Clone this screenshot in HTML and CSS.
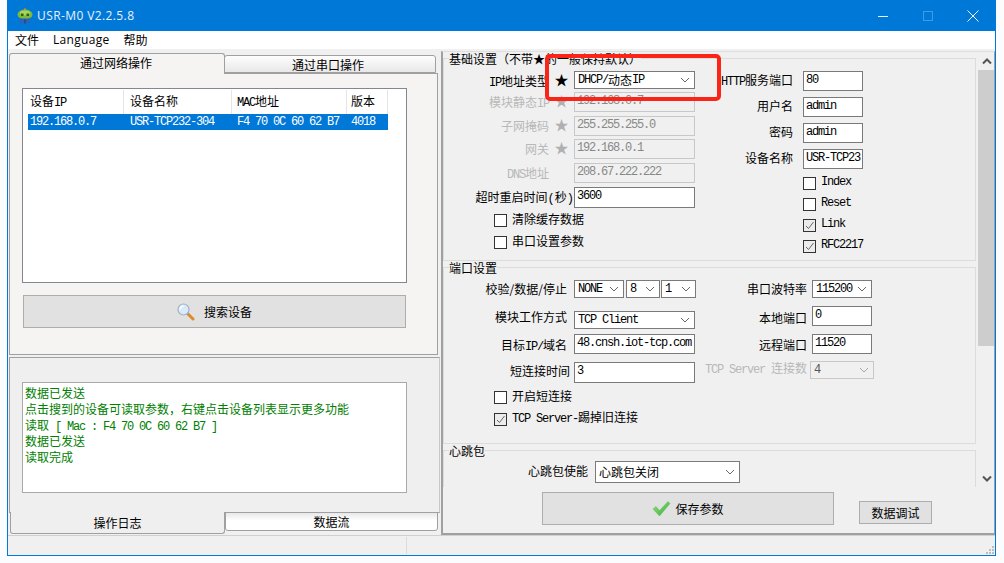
FILE: index.html
```html
<!DOCTYPE html>
<html lang="zh">
<head>
<meta charset="utf-8">
<title>USR-M0 V2.2.5.8</title>
<link rel="stylesheet" href="styles.css">
</head>
<body>
<div class="window">
  <header class="titlebar">
    <svg class="app-icon" width="18" height="18" viewBox="0 0 18 18">
      <path d="M8 1.5 L10 1.5 L10 4 L8 4Z" fill="#e08a2a"/>
      <ellipse cx="9" cy="7.5" rx="7.5" ry="5" fill="#7cb83a"/>
      <ellipse cx="9" cy="6" rx="5" ry="2.5" fill="#a9d65c"/>
      <rect x="5" y="6.5" width="2.5" height="2.5" fill="#2e5d1c"/>
      <rect x="10.5" y="6.5" width="2.5" height="2.5" fill="#2e5d1c"/>
      <rect x="4" y="11.5" width="10" height="4.5" fill="#2d62b5"/>
      <rect x="8.5" y="12.5" width="1" height="4" fill="#173a78"/>
    </svg>
    <span class="app-title">USR-M0 V2.2.5.8</span>
    <div class="win-controls">
      <div class="win-btn"><svg width="12" height="12" viewBox="0 0 12 12"><path d="M1 6.5H11" stroke="#e8f2fb" fill="none"/></svg></div>
      <div class="win-btn"><svg width="12" height="12" viewBox="0 0 12 12"><rect x="1.5" y="1.5" width="9" height="9" stroke="#3f9be3" fill="none"/></svg></div>
      <div class="win-btn"><svg width="12" height="12" viewBox="0 0 12 12"><path d="M.5 .5L11.5 11.5M11.5 .5L.5 11.5" stroke="#fff" fill="none"/></svg></div>
    </div>
  </header>

  <nav class="menubar">
    <span class="menu-item">文件</span>
    <span class="menu-item menu-latin">Language</span>
    <span class="menu-item">帮助</span>
  </nav>

  <main class="main">
    <section class="left">
      <div class="tabs">
        <div class="tab tab-active">通过网络操作</div>
        <div class="tab tab-idle">通过串口操作</div>
      </div>
      <div class="panel">
        <div class="devices">
          <div class="dev-row dev-head">
            <div class="c1">设备<span class="m">IP</span></div>
            <div class="c2">设备名称</div>
            <div class="c3"><span class="m">MAC</span>地址</div>
            <div class="c4">版本</div>
          </div>
          <div class="dev-row dev-sel">
            <div class="c1 m">192.168.0.7</div>
            <div class="c2 m">USR-TCP232-304</div>
            <div class="c3 m">F4 70 0C 60 62 B7</div>
            <div class="c4 m">4018</div>
          </div>
        </div>
        <div class="btn btn-search">
          <svg width="18" height="18" viewBox="0 0 18 18">
            <path d="M10.5 10.5L16 16" stroke="#e08a2a" stroke-width="3" stroke-linecap="round"/>
            <path d="M9.5 9.5L11.5 11.5" stroke="#9a9a9a" stroke-width="2"/>
            <circle cx="6.5" cy="6.5" r="5.5" fill="#dbeaf8" stroke="#9fb2c4" stroke-width="1.2"/>
            <path d="M3 6.5A3.5 3.5 0 0 1 6.5 3" stroke="#fff" stroke-width="1.5" fill="none"/>
          </svg>
          <span>搜索设备</span>
        </div>
      </div>

      <div class="log-pane">
        <div class="log">
          <div class="log-line">数据已发送</div>
          <div class="log-line">点击搜到的设备可读取参数，右键点击设备列表显示更多功能</div>
          <div class="log-line">读取<span class="m"> [ Mac : F4 70 0C 60 62 B7 ]</span></div>
          <div class="log-line">数据已发送</div>
          <div class="log-line">读取完成</div>
        </div>
      </div>
      <div class="tabs-bottom">
        <div class="btab btab-active">操作日志</div>
        <div class="btab btab-idle">数据流</div>
      </div>
    </section>

    <section class="right">
      <div class="scroll-area">
        <div class="groups">
          <fieldset class="group">
            <legend>基础设置（不带★的一般保持默认）</legend>
            <div class="cols">
              <div class="col-a rows-a1">
                <div class="row"><label class="lab">
                  <span class="m">IP</span>地址类型</label><span class="star">★</span>
                  <div class="sel w121"><span class="m">DHCP/</span>动态<span class="m">IP</span><svg class="chev" width="10" height="6" viewBox="0 0 10 6"><path d="M1 1L5 5L9 1" stroke="#666" fill="none"/></svg></div>
                </div>
                <div class="row dim"><label class="lab">模块静态<span class="m">IP</span></label><span class="star">★</span><div class="inp w121 m">192.168.0.7</div></div>
                <div class="row dim"><label class="lab">子网掩码</label><span class="star">★</span><div class="inp w121 m">255.255.255.0</div></div>
                <div class="row dim"><label class="lab">网关</label><span class="star">★</span><div class="inp w121 m">192.168.0.1</div></div>
                <div class="row dim"><label class="lab"><span class="m">DNS</span>地址</label><span class="star"></span><div class="inp w121 m">208.67.222.222</div></div>
                <div class="row"><label class="lab lab-wide">超时重启时间<span class="m paren">(</span>秒<span class="m paren">)</span></label><div class="inp w121 h21 m">3600</div></div>
                <div class="row check-a"><span class="cb"></span><span class="cb-text">清除缓存数据</span></div>
                <div class="row check-a"><span class="cb"></span><span class="cb-text">串口设置参数</span></div>
              </div>
              <div class="col-b">
                <div class="row"><label class="lab-b"><span class="m">HTTP</span>服务端口</label><div class="inp w60 m">80</div></div>
                <div class="row"><label class="lab-b">用户名</label><div class="inp w60 m">admin</div></div>
                <div class="row"><label class="lab-b">密码</label><div class="inp w60 m">admin</div></div>
                <div class="row"><label class="lab-b">设备名称</label><div class="inp w60 m">USR-TCP23</div></div>
                <div class="row check-b"><span class="cb"></span><span class="cb-text m">Index</span></div>
                <div class="row check-b"><span class="cb"></span><span class="cb-text m">Reset</span></div>
                <div class="row check-b"><span class="cb cb-on"><svg width="11" height="11" viewBox="0 0 11 11"><path d="M2 6L4.5 8.5L9.5 2" stroke="#666" fill="none"/></svg></span><span class="cb-text m">Link</span></div>
                <div class="row check-b"><span class="cb cb-on"><svg width="11" height="11" viewBox="0 0 11 11"><path d="M2 6L4.5 8.5L9.5 2" stroke="#666" fill="none"/></svg></span><span class="cb-text m">RFC2217</span></div>
              </div>
            </div>
          </fieldset>

          <fieldset class="group group-2">
            <legend>端口设置</legend>
            <div class="cols">
              <div class="col-a rows-a2">
                <div class="row"><label class="lab2">校验/数据/停止</label>
                  <div class="sel w50"><span class="m">NONE</span><svg class="chev" width="10" height="6" viewBox="0 0 10 6"><path d="M1 1L5 5L9 1" stroke="#666" fill="none"/></svg></div>
                  <div class="sel w34 ml2"><span class="m">8</span><svg class="chev" width="10" height="6" viewBox="0 0 10 6"><path d="M1 1L5 5L9 1" stroke="#666" fill="none"/></svg></div>
                  <div class="sel w35 ml1"><span class="m">1</span><svg class="chev" width="10" height="6" viewBox="0 0 10 6"><path d="M1 1L5 5L9 1" stroke="#666" fill="none"/></svg></div>
                </div>
                <div class="row"><label class="lab2 up3">模块工作方式</label><div class="sel w121"><span class="m">TCP Client</span><svg class="chev" width="10" height="6" viewBox="0 0 10 6"><path d="M1 1L5 5L9 1" stroke="#666" fill="none"/></svg></div></div>
                <div class="row"><label class="lab2 dn2">目标<span class="m">IP/</span>域名</label><div class="inp w121 m">48.cnsh.iot-tcp.com</div></div>
                <div class="row"><label class="lab2 lab-tight">短连接时间</label><div class="inp w121 h21 m">3</div></div>
                <div class="row check-a"><span class="cb"></span><span class="cb-text">开启短连接</span></div>
                <div class="row check-a"><span class="cb cb-on"><svg width="11" height="11" viewBox="0 0 11 11"><path d="M2 6L4.5 8.5L9.5 2" stroke="#666" fill="none"/></svg></span><span class="cb-text"><span class="m">TCP Server-</span>踢掉旧连接</span></div>
              </div>
              <div class="col-c">
                <div class="row"><label class="lab-c">串口波特率</label><div class="sel w60 sel-c"><span class="m">115200</span><svg class="chev" width="10" height="6" viewBox="0 0 10 6"><path d="M1 1L5 5L9 1" stroke="#666" fill="none"/></svg></div></div>
                <div class="row"><label class="lab-c dn3">本地端口</label><div class="inp w60 m">0</div></div>
                <div class="row"><label class="lab-c dn2">远程端口</label><div class="inp w60 m">11520</div></div>
                <div class="row dim"><label class="lab-c lab-srv"><span class="m">TCP Server </span>连接数</label><div class="sel sel-off m"><span>4</span><svg class="chev" width="10" height="6" viewBox="0 0 10 6"><path d="M1 1L5 5L9 1" stroke="#aaa" fill="none"/></svg></div></div>
              </div>
            </div>
          </fieldset>

          <fieldset class="group group-3">
            <legend>心跳包</legend>
            <div class="row"><label class="lab-h">心跳包使能</label><div class="sel sel-h"><span>心跳包关闭</span><svg class="chev" width="10" height="6" viewBox="0 0 10 6"><path d="M1 1L5 5L9 1" stroke="#666" fill="none"/></svg></div></div>
          </fieldset>
        </div>
        <div class="scrollbar">
          <div class="sb-arrow"><svg width="10" height="7" viewBox="0 0 10 7"><path d="M1 5.5L5 1.5L9 5.5" stroke="#555" stroke-width="2" fill="none"/></svg></div>
          <div class="sb-thumb"></div>
          <div class="sb-arrow sb-down"><svg width="10" height="7" viewBox="0 0 10 7"><path d="M1 1.5L5 5.5L9 1.5" stroke="#555" stroke-width="2" fill="none"/></svg></div>
        </div>
      </div>
      <div class="footer">
        <div class="btn btn-save">
          <svg width="19" height="17" viewBox="0 0 19 17">
            <defs><linearGradient id="gc" x1="0" y1="0" x2="1" y2="1"><stop offset="0" stop-color="#9be27a"/><stop offset="1" stop-color="#2fae3c"/></linearGradient></defs>
            <path d="M1 9L4 6.5L7.5 10.5L16 1.5L18 3.5L7.5 16Z" fill="url(#gc)" stroke="#5cb85c" stroke-width=".5"/>
          </svg>
          <span>保存参数</span>
        </div>
        <div class="btn btn-debug">数据调试</div>
      </div>
    </section>
  </main>

  <footer class="statusbar">
    <div class="status-cell"></div>
    <svg class="grip" width="10" height="10" viewBox="0 0 10 10"><path d="M7 1h2v2H7zM4 4h2v2H4zM7 4h2v2H7zM1 7h2v2H1zM4 7h2v2H4zM7 7h2v2H7z" fill="#bdbdbd"/></svg>
  </footer>

  <div class="annotation"></div>
</div>
</body>
</html>
```

FILE: styles.css
```css
* { box-sizing: border-box; }
html, body { margin: 0; padding: 0; }
body {
  width: 1004px;
  height: 563px;
  overflow: hidden;
  background: #fbfcfd;
  color: #000;
  font: 12px/16px "Noto Sans CJK SC", sans-serif;
}
.m {
  font-family: "Liberation Mono", monospace;
  font-size: 12px;
  letter-spacing: -1.2px;
}
.paren { letter-spacing: 0; }

.window {
  position: relative;
  margin-left: 7px;
  width: 989px;
  height: 556px;
  border: 1px solid #0078d7;
  border-top: 0;
  background: #f0f0f0;
  display: flex;
  flex-direction: column;
}

/* title bar */
.titlebar {
  height: 31px;
  flex: none;
  background: #0078d7;
  display: flex;
  align-items: center;
  padding-left: 8px;
  color: #e6f1fb;
}
.app-icon { margin-right: 3px; }
.app-title { font: 12px/16px "Open Sans", sans-serif; letter-spacing: .4px; }
.win-controls { margin-left: auto; display: flex; }
.win-btn { width: 45px; height: 31px; display: flex; align-items: center; justify-content: center; }

/* menu */
.menubar {
  height: 18px;
  flex: none;
  background: #fff;
  display: flex;
  align-items: center;
  padding-left: 7px;
  gap: 14px;
}
.menu-latin { font-family: "Open Sans", sans-serif; letter-spacing: .3px; }

.main { flex: none; height: 486px; display: flex; }

/* left column */
.left { width: 433px; flex: none; padding: 4px 0 0 1px; }
.tabs { display: flex; height: 20px; align-items: flex-end; position: relative; z-index: 1; }
.tab { text-align: center; border: 1px solid #a0a0a0; border-bottom: 0; }
.tab-active { width: 216px; height: 21px; margin-bottom: -1px; padding-right: 2px; background: #f5f4f2; border-radius: 3px 3px 0 0; line-height: 18px; }
.tab-idle { width: 212px; height: 18px; margin-left: -1px; padding-right: 4px; border-left: 1px solid #a0a0a0; background: linear-gradient(#fdfdfd, #e8e8e8); border-bottom: 1px solid #a0a0a0; border-radius: 3px 3px 0 0; line-height: 17px; }
.panel { width: 429px; height: 282px; background: #f5f4f2; border: 1px solid #a0a0a0; padding: 14px 0 0 12px; }
.devices { width: 385px; height: 195px; background: #fff; border: 1px solid #828790; padding: 1px 5px; }
.dev-row { display: flex; width: 360px; }
.dev-head { height: 24px; line-height: 22px; }
.dev-head > div { border-right: 1px solid #e5e5e5; }
.dev-sel { height: 16px; line-height: 16px; background: #0078d7; color: #fff; }
.c1 { width: 96px; padding-left: 2px; }
.c2 { width: 108px; padding-left: 6px; }
.c3 { width: 115px; padding-left: 5px; }
.c4 { width: 41px; padding-left: 4px; }

.btn { background: #e1e1e1; border: 1px solid #adadad; display: flex; align-items: center; justify-content: center; }
.btn-search { width: 383px; height: 33px; margin: 12px 0 0 1px; gap: 9px; }

.log-pane { width: 431px; height: 156px; margin-top: 2px; background: #efefef; border: 1px solid #a0a0a0; border-right-color: #c8c8c8; padding: 24px 0 0 12px; }
.log { width: 385px; height: 111px; background: #fff; border: 1px solid #a9a9a9; padding: 2px 2px; color: #008000; }
.log-line { height: 16px; white-space: nowrap; }
.tabs-bottom { display: flex; align-items: flex-start; margin-top: -1px; padding-left: 1px; position: relative; }
.btab { text-align: center; border: 1px solid #a0a0a0; border-top: 0; border-radius: 0 0 3px 3px; }
.btab-active { width: 215px; height: 22px; background: #efefef; line-height: 21px; }
.btab-idle { width: 213px; height: 19px; background: linear-gradient(#e8e8e8, #fff 45%); border-top: 1px solid #a0a0a0; line-height: 17px; }

/* right column */
.right { width: 554px; flex: none; height: 484px; margin-top: 2px; border: 2px solid #a0a0a0; border-top: 1px solid #dedede; border-right-width: 1px; }
.scroll-area { height: 435px; display: flex; overflow: hidden; }
.groups { width: 534px; flex: none; overflow: hidden; }
.group { margin: 0; padding: 0; width: 533px; border: 1px solid #dcdcdc; min-width: 0; }
.group legend { margin-left: 5px; padding: 0; height: 13px; line-height: 13px; white-space: nowrap; }
.group-3 { height: 80px; padding-top: 4px; }
.cols { display: flex; padding-top: 6px; padding-bottom: 7px; }
.group-2 .cols { padding-top: 6px; padding-bottom: 17px; }

.col-a { width: 251px; flex: none; display: grid; }
.rows-a1 { grid-template-rows: 21px 24px 23px 24px 24px 26px 22px 14px; }
.rows-a2 { grid-template-rows: 31px 23px 28px 28px 22px 14px; }
.col-b { margin-left: 25px; display: grid; grid-template-rows: 26px 26px 26px 27px 21px 21px 21px 14px; }
.col-c { display: grid; grid-template-rows: 26px 28px 27px 20px; }

.row { display: flex; align-items: flex-start; }
.lab, .lab2, .lab-b, .lab-c, .lab-h { text-align: right; line-height: 19px; flex: none; white-space: nowrap; }
.lab { width: 105px; }
.lab-wide { width: 130px; }
.star { width: 25px; flex: none; text-align: center; line-height: 17px; font-size: 14px; }
.lab2 { width: 123px; margin-right: 7px; line-height: 17px; }
.lab-tight { margin-right: 4px; width: 126px; }
.lab-b { width: 73px; margin-right: 10px; line-height: 18px; }
.lab-c { width: 112px; margin-right: 5px; line-height: 17px; }
.lab-srv { margin-right: 3px; margin-top: -2px; width: 112px; }
.lab-h { width: 144px; margin-right: 7px; }
.up3 { margin-top: -3px; }
.dn2 { padding-top: 2px; }
.dn3 { padding-top: 3px; }

.inp { height: 20px; line-height: 17px; border: 1px solid #7a7a7a; background: #fff; padding-left: 2px; white-space: nowrap; overflow: hidden; flex: none; }
.h21 { height: 21px; }
.w121 { width: 121px; }
.w60 { width: 60px; }
.w50 { width: 50px; }
.w34 { width: 34px; }
.w35 { width: 35px; }
.ml1 { margin-left: 1px; }
.ml2 { margin-left: 2px; }
.sel { height: 18px; line-height: 16px; border: 1px solid #7a7a7a; background: #fff; padding: 0 3px; display: flex; align-items: center; flex: none; white-space: nowrap; position: relative; }
.sel .chev { margin-left: auto; flex: none; margin-right: 1px; }
.sel-off { width: 64px; color: #555; border-color: #c8c8c8; background: #f0f0f0; }
.sel-h { width: 145px; height: 22px; }

.dim { color: #b8b8b8; }
.dim .inp { border-color: #c8c8c8; background: #f0f0f0; color: #888; }
.dim .star { color: #b0b0b0; }

.check-a { padding-left: 50px; align-items: center; gap: 5px; height: 14px; }
.check-b { padding-left: 83px; align-items: center; gap: 5px; height: 14px; }
.cb-text { margin-top: -2px; }
.cb { width: 13px; height: 13px; flex: none; border: 1px solid #333; background: #fff; display: flex; align-items: center; justify-content: center; }
.cb-on { background: #ececec; }

/* scrollbar */
.scrollbar { width: 17px; flex: none; margin-left: 1px; display: flex; flex-direction: column; background: #f0f0f0; }
.sb-arrow { height: 18px; display: flex; align-items: center; justify-content: center; flex: none; }
.sb-thumb { height: 276px; background: #cdcdcd; flex: none; }
.sb-down { margin-top: auto; }

/* footer */
.footer { height: 46px; display: flex; align-items: flex-start; padding: 5px 0 0 99px; }
.btn-save { width: 292px; height: 33px; gap: 4px; }
.btn-debug { width: 73px; height: 23px; margin: 9px 0 0 25px; }

/* status */
.statusbar { height: 20px; flex: none; border-top: 1px solid #d0d0d0; display: flex; align-items: stretch; position: relative; }
.status-cell { width: 399px; border-right: 1px solid #dcdcdc; margin: 1px 0; }
.grip { margin: auto 0 0 auto; }

/* red annotation on the screenshot */
.annotation { position: absolute; left: 537px; top: 54px; width: 176px; height: 47px; border: 4px solid #fb2418; border-radius: 5px; pointer-events: none; }
```
